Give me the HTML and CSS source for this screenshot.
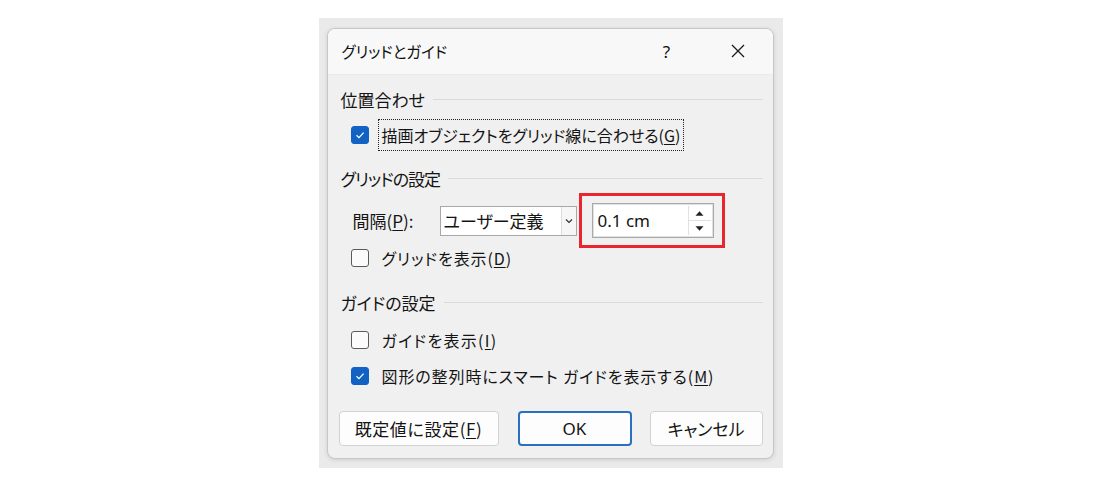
FILE: index.html
```html
<!DOCTYPE html>
<html lang="ja">
<head>
<meta charset="utf-8">
<title>グリッドとガイド</title>
<link rel="stylesheet" href="styles.css">
</head>
<body>
<div class="backdrop">
  <div class="dialog">
    <div class="titlebar">
      <span class="title">グリッドとガイド</span>
      <span class="help">?</span>
      <span class="close">
        <svg width="16" height="16" viewBox="0 0 16 16"><path d="M2 2 L14 14 M14 2 L2 14" stroke="#1b1b1b" stroke-width="1.3" fill="none"/></svg>
      </span>
    </div>
    <div class="content">
      <div class="group-head"><span>位置合わせ</span><i class="rule"></i></div>
      <div class="check-row first">
        <span class="box checked"><svg width="12" height="12" viewBox="0 0 12 12"><path d="M2.5 6.2 L5 8.6 L9.6 3.6" stroke="#fff" stroke-width="1.3" fill="none"/></svg></span>
        <span class="label focus">描画オブジェクトをグリッド線に合わせる(<u>G</u>)</span>
      </div>

      <div class="group-head second"><span class="tight">グリッドの設定</span><i class="rule"></i></div>
      <div class="spacing-row">
        <span class="field-label">間隔(<u>P</u>):</span>
        <div class="select">
          <span class="select-value">ユーザー定義</span>
          <span class="select-arrow"><svg width="8" height="6" viewBox="0 0 8 6"><path d="M1 1.5 L4 4.5 L7 1.5" stroke="#333" stroke-width="1.2" fill="none"/></svg></span>
        </div>
        <div class="highlight">
          <div class="spin">
            <span class="spin-value">0.1 cm</span>
            <span class="spin-buttons">
              <span class="spin-btn"><svg width="9" height="5" viewBox="0 0 9 5"><path d="M0.5 4.8 L4.5 0.3 L8.5 4.8 Z" fill="#222"/></svg></span>
              <span class="spin-btn"><svg width="9" height="5" viewBox="0 0 9 5"><path d="M0.5 0.2 L4.5 4.7 L8.5 0.2 Z" fill="#222"/></svg></span>
            </span>
          </div>
        </div>
      </div>
      <div class="check-row grid">
        <span class="box"></span>
        <span class="label loose">グリッドを表示(<u>D</u>)</span>
      </div>

      <div class="group-head third"><span>ガイドの設定</span><i class="rule"></i></div>
      <div class="check-row guide">
        <span class="box"></span>
        <span class="label looser">ガイドを表示(<u>I</u>)</span>
      </div>
      <div class="check-row smart">
        <span class="box checked"><svg width="12" height="12" viewBox="0 0 12 12"><path d="M2.5 6.2 L5 8.6 L9.6 3.6" stroke="#fff" stroke-width="1.3" fill="none"/></svg></span>
        <span class="label loose">図形の整列時にスマート ガイドを表示する(<u>M</u>)</span>
      </div>

      <div class="buttons">
        <button class="btn wide">既定値に設定(<u>F</u>)</button>
        <button class="btn primary">OK</button>
        <button class="btn">キャンセル</button>
      </div>
    </div>
  </div>
</div>
</body>
</html>
```
FILE: styles.css
```css
html, body {
  margin: 0;
  height: 100%;
  background: #ffffff;
}

body {
  display: flex;
  align-items: center;
  justify-content: center;
  font-family: "Noto Sans CJK JP", "Noto Sans", sans-serif;
  color: #141414;
  font-feature-settings: "palt";
}

.backdrop {
  width: 464px;
  height: 450px;
  box-sizing: border-box;
  padding: 10px 9px 9px 8px;
  background: #eaeaea;
}

.dialog {
  width: 447px;
  height: 431px;
  box-sizing: border-box;
  border: 1px solid #c6c6c6;
  border-radius: 8px;
  background: #f0f0f0;
  overflow: hidden;
  display: flex;
  flex-direction: column;
  box-shadow: 0 1px 4px rgba(0, 0, 0, 0.12);
}

/* title bar */
.titlebar {
  height: 45px;
  flex: none;
  display: flex;
  align-items: center;
  padding: 0 12px 0 14px;
  background: #f8f8f8;
  border-bottom: 1px solid #ebebeb;
}

.title {
  flex: 1;
  font-size: 15.5px;
  color: #111;
}

.help {
  width: 20px;
  text-align: center;
  font-size: 17px;
  font-family: "Noto Sans", sans-serif;
  color: #111;
  margin-right: 38px;
}

.close {
  width: 46px;
  height: 32px;
  display: flex;
  align-items: center;
  justify-content: center;
}

/* content */
.content {
  flex: 1;
  padding: 10px 10px 12px 11px;
  display: flex;
  flex-direction: column;
}

.group-head {
  height: 30px;
  display: flex;
  align-items: center;
  padding-left: 2px;
  font-size: 17px;
}

.group-head .tight {
  letter-spacing: -1px;
}

.group-head .rule {
  flex: 1;
  height: 1px;
  background: #dadada;
  margin-left: 8px;
}

.group-head.second { margin-top: 11px; }
.group-head.third { margin-top: 12px; }

.check-row {
  height: 36px;
  display: flex;
  align-items: center;
  padding-left: 12px;
  font-size: 16px;
}

.check-row.first { margin-top: 2px; }
.check-row.grid { margin-top: 1px; }
.check-row.guide { margin-top: 4px; }
.check-row.smart { margin-top: 0; }

.box {
  width: 18px;
  height: 18px;
  box-sizing: border-box;
  border: 1px solid #5a5a5a;
  border-radius: 3px;
  background: #fbfbfb;
  display: flex;
  align-items: center;
  justify-content: center;
  flex: none;
}

.box.checked {
  background: #1262c4;
  border-color: #1262c4;
}

.label {
  margin-left: 11px;
  padding: 2px 2px;
}

.label.loose {
  letter-spacing: 0.9px;
}

.label.looser {
  letter-spacing: 1.3px;
}

.label.focus {
  outline: 1px dotted #222;
  outline-offset: 1px;
}

u {
  text-underline-offset: 2px;
}

/* spacing row */
.spacing-row {
  height: 36px;
  margin-top: 9px;
  display: flex;
  align-items: center;
  padding-left: 14px;
  font-size: 17px;
}

.field-label {
  width: 87px;
}

.select {
  width: 137px;
  height: 30px;
  box-sizing: border-box;
  border: 1px solid #a8a8a8;
  background: #ffffff;
  display: flex;
  align-items: stretch;
}

.select-value {
  flex: 1;
  padding-left: 3px;
  display: flex;
  align-items: center;
}

.select-arrow {
  width: 14px;
  border-left: 1px solid #dcdcdc;
  display: flex;
  align-items: center;
  justify-content: center;
  background: #f6f6f6;
}

.highlight {
  margin: -10px 0 -10px 2px;
  padding: 7px 8px 7px 10px;
  border: 3px solid #e8262d;
}

.spin {
  width: 122px;
  height: 35px;
  box-sizing: border-box;
  border: 1px solid #a9a9a9;
  box-shadow: inset 0 0 0 1px #e2e2e2;
  background: #ffffff;
  display: flex;
  align-items: center;
  padding: 2px 2px 2px 5px;
}

.spin-value {
  flex: 1;
  font-family: "Noto Sans", sans-serif;
  font-size: 17px;
}

.spin-buttons {
  width: 22px;
  height: 29px;
  display: flex;
  flex-direction: column;
  border-left: 1px solid #e0e0e0;
}

.spin-btn {
  flex: 1;
  display: flex;
  align-items: center;
  justify-content: center;
}

.spin-btn + .spin-btn {
  border-top: 1px solid #e0e0e0;
}

/* buttons */
.buttons {
  margin-top: auto;
  display: flex;
  gap: 18px;
}

.btn {
  width: 113px;
  height: 35px;
  box-sizing: border-box;
  border: 1px solid #d2d2d2;
  border-radius: 4px;
  background: #fdfdfd;
  font-family: "Noto Sans CJK JP", "Noto Sans", sans-serif;
  font-feature-settings: "palt";
  font-size: 17px;
  color: #141414;
  padding: 0;
}

.btn.wide {
  width: 160px;
  margin-right: 1px;
  letter-spacing: 0.6px;
}

.btn.primary {
  width: 114px;
  border: 2px solid #2a6fc0;
  font-family: "Noto Sans", sans-serif;
}
```
